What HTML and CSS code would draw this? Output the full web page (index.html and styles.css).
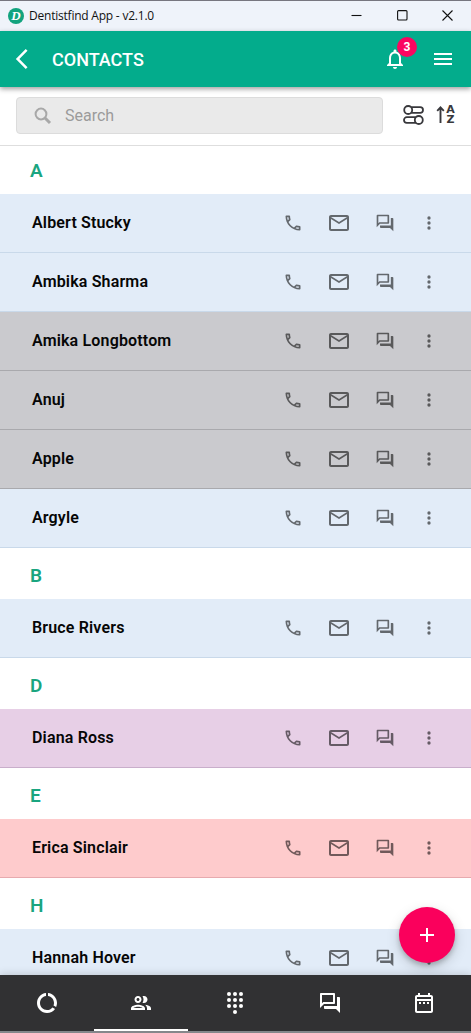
FILE: index.html
```html
<!DOCTYPE html>
<html lang="en">
<head>
<meta charset="utf-8">
<title>Dentistfind App</title>
<link rel="stylesheet" href="styles.css">
</head>
<body>
<svg class="sprite" aria-hidden="true">
  <symbol id="phone" viewBox="0 0 24 24"><path d="M6.54 5c.06.89.21 1.76.45 2.59l-1.2 1.2c-.41-1.2-.67-2.47-.76-3.79h1.51m9.86 12.02c.85.24 1.72.39 2.6.45v1.49c-1.32-.09-2.59-.35-3.8-.75l1.2-1.19M7.5 3H4c-.55 0-1 .45-1 1 0 9.39 7.61 17 17 17 .55 0 1-.45 1-1v-3.49c0-.55-.45-1-1-1-1.24 0-2.45-.2-3.57-.57-.1-.04-.21-.05-.31-.05-.26 0-.51.1-.71.29l-2.2 2.2c-2.83-1.45-5.15-3.76-6.59-6.59l2.2-2.2c.28-.28.36-.67.25-1.02C8.7 6.45 8.5 5.25 8.5 4c0-.55-.45-1-1-1z"/></symbol>
  <symbol id="mail" viewBox="0 0 24 24"><path d="M22 6c0-1.1-.9-2-2-2H4c-1.1 0-2 .9-2 2v12c0 1.1.9 2 2 2h16c1.1 0 2-.9 2-2V6zm-2 0l-8 5-8-5h16zm0 12H4V8l8 5 8-5v10z"/></symbol>
  <symbol id="chat" viewBox="0 0 24 24"><path d="M15 4v7H5.17L4 12.17V4h11m1-2H3c-.55 0-1 .45-1 1v14l4-4h10c.55 0 1-.45 1-1V3c0-.55-.45-1-1-1zm5 4h-2v9H6v2c0 .55.45 1 1 1h11l4 4V7c0-.55-.45-1-1-1z"/></symbol>
  <symbol id="more" viewBox="0 0 24 24"><circle cx="12" cy="6" r="2"/><circle cx="12" cy="12" r="2"/><circle cx="12" cy="18" r="2"/></symbol>
</svg>
<div class="app">
  <div class="titlebar">
    <span class="logo">D</span>
    <span class="app-name">Dentistfind App - v2.1.0</span>
    <div class="window-controls">
      <svg width="11" height="11" viewBox="0 0 11 11"><path d="M0.5 5.5h10"/></svg>
      <svg width="11" height="11" viewBox="0 0 11 11"><rect x="0.6" y="0.6" width="9.4" height="9.4" rx="1"/></svg>
      <svg width="11" height="11" viewBox="0 0 11 11"><path d="M0.5 0.5l10 10M10.5 0.5l-10 10"/></svg>
    </div>
  </div>
  <header class="header">
    <svg class="icon back" viewBox="0 0 24 24"><path d="M17.51 3.87L15.73 2.1 5.84 12l9.9 9.9 1.77-1.77L9.38 12l8.13-8.13z"/></svg>
    <h1 class="page-title">CONTACTS</h1>
    <div class="bell">
      <svg class="icon" viewBox="0 0 24 24"><path d="M12 22c1.1 0 2-.9 2-2h-4c0 1.1.9 2 2 2zm6-6v-5c0-3.07-1.63-5.64-4.5-6.32V4c0-.83-.67-1.5-1.5-1.5s-1.5.67-1.5 1.5v.68C7.64 5.36 6 7.92 6 11v5l-2 2v1h16v-1l-2-2zm-2 1H8v-6c0-2.48 1.51-4.5 4-4.5s4 2.02 4 4.5v6z"/></svg>
      <span class="badge">3</span>
    </div>
    <svg class="icon" viewBox="0 0 24 24"><path d="M3 18h18v-2H3v2zm0-5h18v-2H3v2zm0-7v2h18V6H3z"/></svg>
  </header>
  <div class="toolbar">
    <div class="search">
      <svg width="18" height="18" viewBox="0 0 18 18"><circle cx="7" cy="7" r="5.4"/><path class="handle" d="M11 11l5 5"/></svg>
      <span>Search</span>
    </div>
    <svg class="filter" width="21" height="20" viewBox="0 0 21 20"><path d="M8.2 2.2h9a2.8 2.8 0 0 1 0 5.6h-9M12.8 12.2h-9a2.8 2.8 0 0 0 0 5.6h9"/><circle cx="5.2" cy="5" r="4"/><circle cx="15.8" cy="15" r="4"/></svg>
    <div class="sort">
      <svg width="9" height="18" viewBox="0 0 9 18"><path d="M4.5 17V2M1.2 4.8L4.5 1.4l3.3 3.4"/></svg>
      <div class="sort-letters"><span>A</span><span>Z</span></div>
    </div>
  </div>
  <main class="list">
    <h2 class="letter first">A</h2>
    <div class="row blue"><span class="name">Albert Stucky</span><svg class="small"><use href="#phone"/></svg><svg class="icon"><use href="#mail"/></svg><svg class="small"><use href="#chat"/></svg><svg class="small"><use href="#more"/></svg></div>
    <div class="row blue"><span class="name">Ambika Sharma</span><svg class="small"><use href="#phone"/></svg><svg class="icon"><use href="#mail"/></svg><svg class="small"><use href="#chat"/></svg><svg class="small"><use href="#more"/></svg></div>
    <div class="row gray"><span class="name">Amika Longbottom</span><svg class="small"><use href="#phone"/></svg><svg class="icon"><use href="#mail"/></svg><svg class="small"><use href="#chat"/></svg><svg class="small"><use href="#more"/></svg></div>
    <div class="row gray"><span class="name">Anuj</span><svg class="small"><use href="#phone"/></svg><svg class="icon"><use href="#mail"/></svg><svg class="small"><use href="#chat"/></svg><svg class="small"><use href="#more"/></svg></div>
    <div class="row gray"><span class="name">Apple</span><svg class="small"><use href="#phone"/></svg><svg class="icon"><use href="#mail"/></svg><svg class="small"><use href="#chat"/></svg><svg class="small"><use href="#more"/></svg></div>
    <div class="row blue"><span class="name">Argyle</span><svg class="small"><use href="#phone"/></svg><svg class="icon"><use href="#mail"/></svg><svg class="small"><use href="#chat"/></svg><svg class="small"><use href="#more"/></svg></div>
    <h2 class="letter">B</h2>
    <div class="row blue"><span class="name">Bruce Rivers</span><svg class="small"><use href="#phone"/></svg><svg class="icon"><use href="#mail"/></svg><svg class="small"><use href="#chat"/></svg><svg class="small"><use href="#more"/></svg></div>
    <h2 class="letter">D</h2>
    <div class="row purple"><span class="name">Diana Ross</span><svg class="small"><use href="#phone"/></svg><svg class="icon"><use href="#mail"/></svg><svg class="small"><use href="#chat"/></svg><svg class="small"><use href="#more"/></svg></div>
    <h2 class="letter">E</h2>
    <div class="row red"><span class="name">Erica Sinclair</span><svg class="small"><use href="#phone"/></svg><svg class="icon"><use href="#mail"/></svg><svg class="small"><use href="#chat"/></svg><svg class="small"><use href="#more"/></svg></div>
    <h2 class="letter">H</h2>
    <div class="row blue"><span class="name">Hannah Hover</span><svg class="small"><use href="#phone"/></svg><svg class="icon"><use href="#mail"/></svg><svg class="small"><use href="#chat"/></svg><svg class="small"><use href="#more"/></svg></div>
  </main>
  <nav class="nav">
    <div class="tab"><svg class="icon" viewBox="0 0 24 24"><path d="M13 2.05v3.03c3.39.49 6 3.39 6 6.92 0 .9-.18 1.75-.48 2.54l2.6 1.53c.56-1.24.88-2.62.88-4.07 0-5.18-3.95-9.45-9-9.95zM12 19c-3.87 0-7-3.13-7-7 0-3.53 2.61-6.43 6-6.92V2.05c-5.06.5-9 4.76-9 9.95 0 5.52 4.47 10 9.99 10 3.31 0 6.24-1.61 8.06-4.09l-2.6-1.53C16.17 17.98 14.21 19 12 19z"/></svg></div>
    <div class="tab active"><svg class="icon" viewBox="0 0 24 24"><path d="M9 13.75c-2.34 0-7 1.17-7 3.5V19h14v-1.75c0-2.33-4.66-3.5-7-3.5zM4.34 17c.84-.58 2.87-1.25 4.66-1.25s3.82.67 4.66 1.25H4.34zM9 12c1.93 0 3.5-1.57 3.5-3.5S10.93 5 9 5 5.5 6.57 5.5 8.5 7.07 12 9 12zm0-5c.83 0 1.5.67 1.5 1.5S9.83 10 9 10s-1.5-.67-1.5-1.5S8.17 7 9 7zm7.04 6.81c1.16.84 1.96 1.96 1.96 3.44V19h4v-1.75c0-2.02-3.5-3.17-5.96-3.44zM15 12c1.93 0 3.5-1.57 3.5-3.5S16.93 5 15 5c-.54 0-1.04.13-1.5.35.63.89 1 1.98 1 3.15s-.37 2.26-1 3.15c.46.22.96.35 1.5.35z"/></svg></div>
    <div class="tab"><svg class="icon" viewBox="0 0 24 24"><circle cx="6" cy="3" r="2"/><circle cx="12" cy="3" r="2"/><circle cx="18" cy="3" r="2"/><circle cx="6" cy="9" r="2"/><circle cx="12" cy="9" r="2"/><circle cx="18" cy="9" r="2"/><circle cx="6" cy="15" r="2"/><circle cx="12" cy="15" r="2"/><circle cx="18" cy="15" r="2"/><circle cx="12" cy="21" r="2"/></svg></div>
    <div class="tab"><svg class="icon"><use href="#chat"/></svg></div>
    <div class="tab"><svg class="icon" viewBox="0 0 24 24"><path d="M7 11h2v2H7v-2zm14-5v14c0 1.1-.9 2-2 2H5c-1.11 0-2-.9-2-2l.01-14c0-1.1.88-2 1.99-2h1V2h2v2h8V2h2v2h1c1.1 0 2 .9 2 2zM5 8h14V6H5v2zm14 12V10H5v10h14zm-4-7h2v-2h-2v2zm-4 0h2v-2h-2v2z"/></svg></div>
  </nav>
  <div class="fab"><svg class="icon" viewBox="0 0 24 24"><path d="M19 13h-6v6h-2v-6H5v-2h6V5h2v6h6v2z"/></svg></div>
</div>
</body>
</html>
```

FILE: styles.css
```css
* { box-sizing: border-box; }
body { margin: 0; font-family: Roboto, sans-serif; background: #fff; }
svg { display: block; flex: none; }
.sprite { position: absolute; width: 0; height: 0; }
.icon { width: 24px; height: 24px; fill: currentColor; }
.small { width: 20px; height: 20px; fill: currentColor; }

.app {
  position: relative;
  display: flex;
  flex-direction: column;
  height: 1033px;
  overflow: hidden;
  border-top: 1px solid #77767f;
  border-bottom: 2px solid #85878b;
}

.titlebar {
  display: flex;
  align-items: center;
  flex: none;
  height: 30px;
  padding: 0 18px 0 8px;
  background: #eff3fa;
  color: #111;
}
.logo {
  width: 16px;
  height: 16px;
  border-radius: 50%;
  background: #12a37e;
  color: #fff;
  font: italic bold 13px/16px "Liberation Serif", serif;
  text-align: center;
}
.app-name {
  margin-left: 5px;
  font: 12px/16px "Open Sans", sans-serif;
  letter-spacing: -0.22px;
  white-space: nowrap;
}
.window-controls {
  display: flex;
  gap: 34.5px;
  margin: -1px 0 0 auto;
}
.window-controls svg { fill: none; stroke: #111; stroke-width: 1.1; }

.header {
  position: relative;
  z-index: 2;
  display: flex;
  align-items: center;
  flex: none;
  height: 56px;
  padding: 0 16px 0 10px;
  background: #03ac8c;
  color: #fff;
  box-shadow: 0 2px 5px rgba(0, 0, 0, 0.38);
}
.page-title {
  margin: 0 auto 0 18px;
  padding-top: 2px;
  font-size: 18px;
  font-weight: 500;
  line-height: 24px;
}
.bell { position: relative; margin-right: 24px; }
.badge {
  position: absolute;
  top: -10px;
  left: 14px;
  width: 20px;
  height: 20px;
  border-radius: 50%;
  background: #fb0560;
  font-size: 12px;
  font-weight: 700;
  line-height: 20px;
  text-align: center;
}

.toolbar {
  display: flex;
  align-items: flex-start;
  flex: none;
  height: 59px;
  padding: 10px 15px 0 16px;
  border-bottom: 1px solid #dedede;
}
.search {
  display: flex;
  align-items: center;
  flex: none;
  gap: 13px;
  width: 367px;
  height: 37px;
  padding-left: 17px;
  border: 1px solid #dcdcdc;
  border-radius: 4px;
  background: #eaeaea;
  color: #9b9b9b;
  font-size: 16px;
}
.search svg { fill: none; stroke: #a8a8a8; stroke-width: 2; }
.search .handle { stroke-width: 3; }
.filter {
  margin: 8px 0 0 20px;
  fill: none;
  stroke: #38383c;
  stroke-width: 1.8;
}
.sort { display: flex; margin: 8px 0 0 12px; }
.sort svg { margin-top: 1px; fill: none; stroke: #38383c; stroke-width: 1.9; }
.sort-letters {
  display: flex;
  flex-direction: column;
  width: 11px;
  color: #38383c;
  font: bold 11px/10px "DejaVu Sans", sans-serif;
  text-align: center;
}

.list { flex: 1; min-height: 0; overflow: hidden; }
.letter {
  height: 51px;
  margin: 0;
  padding: 4px 30px 0;
  color: #1aa580;
  font-size: 19px;
  font-weight: 600;
  line-height: 48px;
}
.letter.first { height: 48px; padding-top: 1px; }
.row {
  display: flex;
  align-items: center;
  height: 59px;
  padding: 0 32px;
  border-bottom: 1px solid;
  color: rgba(0, 0, 0, 0.56);
}
.name {
  margin-right: auto;
  padding-bottom: 2px;
  color: #060606;
  font-size: 16px;
  font-weight: 600;
  letter-spacing: 0.16px;
  white-space: nowrap;
}
.row .icon { margin: 0 24px; }
.row .small:last-child { margin-left: 24px; }
.blue { background: #e2ecf8; border-color: #c9d9ea; }
.gray { background: #cacace; border-color: #a9a9ad; }
.purple { background: #e7cfe6; border-color: #c9aecb; }
.red { background: #fecbcc; border-color: #e7aaae; }

.nav {
  z-index: 2;
  display: flex;
  flex: none;
  height: 56px;
  background: #313133;
  color: #fff;
  box-shadow: 0 -1px 8px rgba(0, 0, 0, 0.16);
}
.tab {
  display: flex;
  align-items: center;
  justify-content: center;
  flex: 1;
  border-bottom: 2px solid transparent;
  padding-top: 2px;
}
.tab.active { border-color: #fff; }
.tab:nth-child(3) .icon { margin-right: 1px; }

.fab {
  position: absolute;
  right: 16px;
  bottom: 68px;
  z-index: 1;
  display: flex;
  align-items: center;
  justify-content: center;
  width: 56px;
  height: 56px;
  border-radius: 50%;
  background: #fa005c;
  color: #fff;
  box-shadow: 0 3px 5px rgba(0, 0, 0, 0.2), 0 5px 14px rgba(0, 0, 0, 0.16);
}
```
